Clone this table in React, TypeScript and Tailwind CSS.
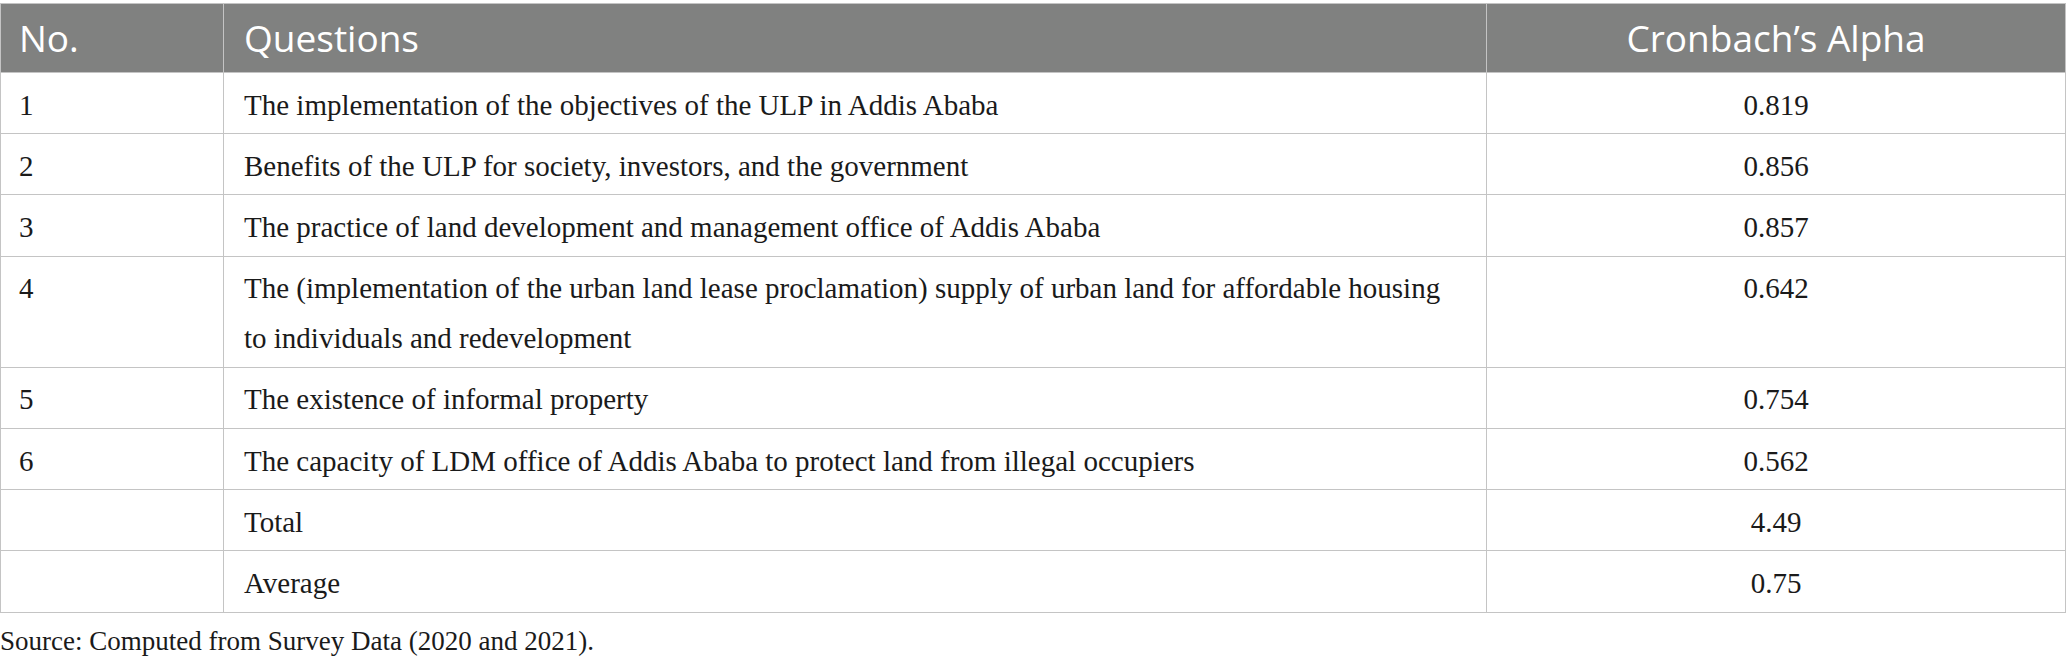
import React from 'react';

const rows = [
  { no: '1', q: 'The implementation of the objectives of the ULP in Addis Ababa', a: '0.819' },
  { no: '2', q: 'Benefits of the ULP for society, investors, and the government', a: '0.856' },
  { no: '3', q: 'The practice of land development and management office of Addis Ababa', a: '0.857' },
  {
    no: '4',
    q: 'The (implementation of the urban land lease proclamation) supply of urban land for affordable housing to individuals and redevelopment',
    a: '0.642',
  },
  { no: '5', q: 'The existence of informal property', a: '0.754' },
  { no: '6', q: 'The capacity of LDM office of Addis Ababa to protect land from illegal occupiers', a: '0.562' },
  { no: '', q: 'Total', a: '4.49' },
  { no: '', q: 'Average', a: '0.75' },
];

const serif = "font-['Liberation_Serif','Times_New_Roman',serif]";

const App = () => {
  return (
    <div className="w-[2067px] h-[666px] bg-white pt-[3px]">
      <table className="w-[2066px] border-collapse table-fixed">
        <colgroup>
          <col className="w-[223px]" />
          <col className="w-[1263px]" />
          <col />
        </colgroup>
        <thead>
          <tr className="bg-[#808180] text-white font-['Open_Sans',sans-serif] text-[37px] leading-[66px] h-[69px]">
            <th className="border border-[#c4c4c4] px-[18px] text-left font-normal">No.</th>
            <th className="border border-[#c4c4c4] px-[20px] text-left font-normal">Questions</th>
            <th className="border border-[#c4c4c4] px-[20px] text-center font-normal">Cronbach’s Alpha</th>
          </tr>
        </thead>
        <tbody className={`${serif} text-[29px] leading-[50px] text-[#1a1a1a]`}>
          {rows.map((r, i) => (
            <tr key={i}>
              <td className="border border-[#c4c4c4] px-[18px] pt-[6.7px] pb-[3.5px] align-top">{r.no}</td>
              <td className="border border-[#c4c4c4] pl-[20px] pr-[24px] pt-[6.7px] pb-[3.5px] align-top">{r.q}</td>
              <td className="border border-[#c4c4c4] px-[20px] pt-[6.7px] pb-[3.5px] align-top text-center">{r.a}</td>
            </tr>
          ))}
        </tbody>
      </table>
      <p className={`${serif} text-[27px] text-[#1a1a1a] mt-[13px] leading-[30px]`}>
        Source: Computed from Survey Data (2020 and 2021).
      </p>
    </div>
  );
};

export default App;
